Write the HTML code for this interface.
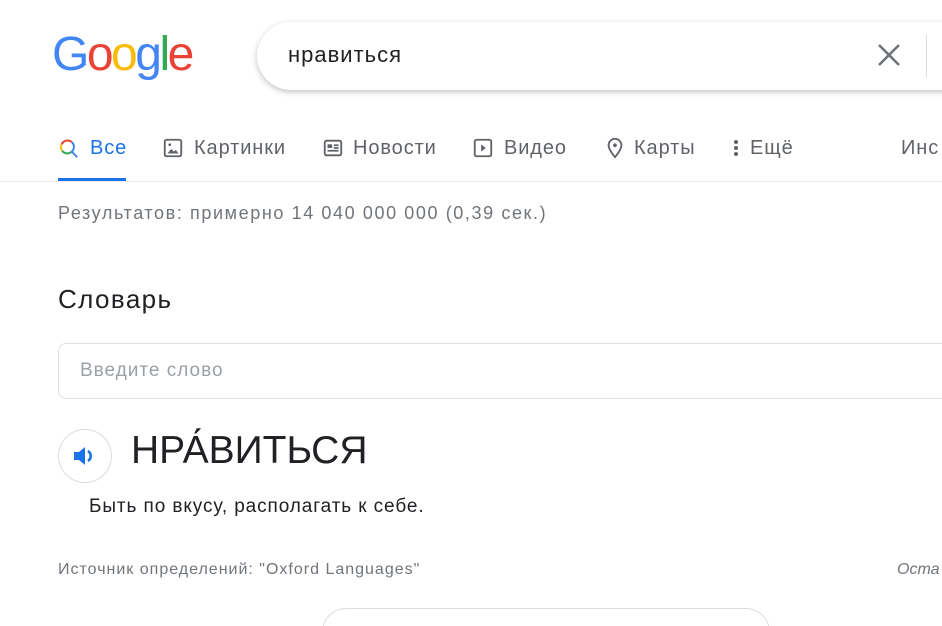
<!DOCTYPE html>
<html><head><meta charset="utf-8"><style>
*{margin:0;padding:0;box-sizing:border-box}
html,body{width:942px;height:626px;overflow:hidden}
body{background:#fff;font-family:"Liberation Sans",Arial,sans-serif;position:relative;color:#202124}
.a{position:absolute;white-space:nowrap}
.t{position:absolute;top:137px;font-size:20px;color:#5f6368;letter-spacing:0.9px;white-space:nowrap}
.i{position:absolute;top:137px;width:22px;height:22px}
</style></head><body>
<div class="a" style="left:52px;top:27px;font-size:48px;letter-spacing:-2.5px"><span style="color:#4285f4">G</span><span style="color:#ea4335">o</span><span style="color:#fbbc05">o</span><span style="color:#4285f4">g</span><span style="color:#34a853">l</span><span style="color:#ea4335">e</span></div>
<div class="a" style="left:257px;top:22px;width:720px;height:68px;border-radius:34px;box-shadow:0 2px 6px rgba(32,33,36,.28);background:#fff"></div>
<div class="a" style="left:288px;top:42px;font-size:22px;color:#202124;letter-spacing:1px">нравиться</div>
<svg class="a" style="left:877px;top:43px" width="24" height="24" viewBox="0 0 24 24"><path d="M2 2L22 22M22 2L2 22" stroke="#70757a" stroke-width="2.6"/></svg>
<div class="a" style="left:926px;top:35px;width:1px;height:42px;background:#dadce0"></div>

<svg class="i" style="left:58px" viewBox="0 0 24 24"><path d="M15 5.5A7 7 0 0 0 4 8" stroke="#ea4335" stroke-width="2.2" fill="none"/><path d="M4 8A7 7 0 0 0 4.5 15" stroke="#fbbc05" stroke-width="2.2" fill="none"/><path d="M4.5 15A7 7 0 0 0 15 16" stroke="#34a853" stroke-width="2.2" fill="none"/><path d="M15 5.5A7 7 0 0 1 15 16L21 22" stroke="#4285f4" stroke-width="2.2" fill="none"/></svg>
<div class="t" style="left:90px;color:#1a73e8">Все</div>
<div class="a" style="left:58px;top:178px;width:68px;height:3px;background:#1a73e8"></div>
<svg class="i" style="left:162px" viewBox="0 0 24 24"><rect x="3" y="3" width="18" height="18" rx="2" fill="none" stroke="#5f6368" stroke-width="2"/><path d="M6 18l4-5 3 3 2-2 3 4z" fill="#5f6368"/><circle cx="8.5" cy="8.5" r="1.5" fill="#5f6368"/></svg>
<div class="t" style="left:194px">Картинки</div>
<svg class="i" style="left:322px" viewBox="0 0 24 24"><rect x="3" y="4" width="18" height="16" rx="2" fill="none" stroke="#5f6368" stroke-width="2"/><rect x="6" y="8" width="5" height="4" fill="#5f6368"/><path d="M13 9h5M13 12h5M6 15h12" stroke="#5f6368" stroke-width="1.8"/></svg>
<div class="t" style="left:353px">Новости</div>
<svg class="i" style="left:472px" viewBox="0 0 24 24"><rect x="3" y="3" width="18" height="18" rx="2" fill="none" stroke="#5f6368" stroke-width="2"/><path d="M10 8l5 4-5 4z" fill="#5f6368"/></svg>
<div class="t" style="left:504px">Видео</div>
<svg class="i" style="left:604px" viewBox="0 0 24 24"><path d="M12 2a7 7 0 0 0-7 7c0 5 7 13 7 13s7-8 7-13a7 7 0 0 0-7-7z" fill="none" stroke="#5f6368" stroke-width="2"/><circle cx="12" cy="9" r="2" fill="#5f6368"/></svg>
<div class="t" style="left:634px">Карты</div>
<svg class="i" style="left:729px;width:14px" viewBox="0 0 14 22"><circle cx="7" cy="5" r="2" fill="#5f6368"/><circle cx="7" cy="11" r="2" fill="#5f6368"/><circle cx="7" cy="17" r="2" fill="#5f6368"/></svg>
<div class="t" style="left:750px">Ещё</div>
<div class="t" style="left:901px">Инс</div>
<div class="a" style="left:0;top:181px;width:942px;height:1px;background:#ebebeb"></div>

<div class="a" style="left:58px;top:203px;font-size:18px;color:#70757a;letter-spacing:1.6px">Результатов: примерно 14 040 000 000 (0,39 сек.)</div>
<div class="a" style="left:58px;top:284px;font-size:26px;color:#202124;letter-spacing:1.4px">Словарь</div>
<div class="a" style="left:58px;top:343px;width:900px;height:56px;border:1px solid #dfe1e5;border-radius:8px"></div>
<div class="a" style="left:80px;top:360px;font-size:19px;color:#9aa0a6;letter-spacing:1px">Введите слово</div>
<div class="a" style="left:58px;top:429px;width:54px;height:54px;border:1px solid #dadce0;border-radius:50%"></div>
<svg class="a" style="left:72px;top:443px" width="26" height="26" viewBox="0 0 26 26"><path d="M2 9h5l6-5v18l-6-5H2z" fill="#1a73e8"/><path d="M16 8a6 6 0 0 1 0 10" stroke="#1a73e8" stroke-width="2.6" fill="none"/></svg>
<div class="a" style="left:131px;top:429px;font-size:39px;color:#202124">НРА́ВИТЬСЯ</div>
<div class="a" style="left:89px;top:496px;font-size:19px;color:#202124;letter-spacing:0.9px">Быть по вкусу, располагать к себе.</div>
<div class="a" style="left:58px;top:561px;font-size:16px;color:#70757a;letter-spacing:1px">Источник определений: "Oxford Languages"</div>
<div class="a" style="left:897px;top:561px;font-size:16px;color:#70757a;font-style:italic">Оста</div>
<div class="a" style="left:322px;top:608px;width:448px;height:40px;border:1px solid #dadce0;border-bottom:none;border-radius:24px 24px 0 0"></div>
</body></html>
